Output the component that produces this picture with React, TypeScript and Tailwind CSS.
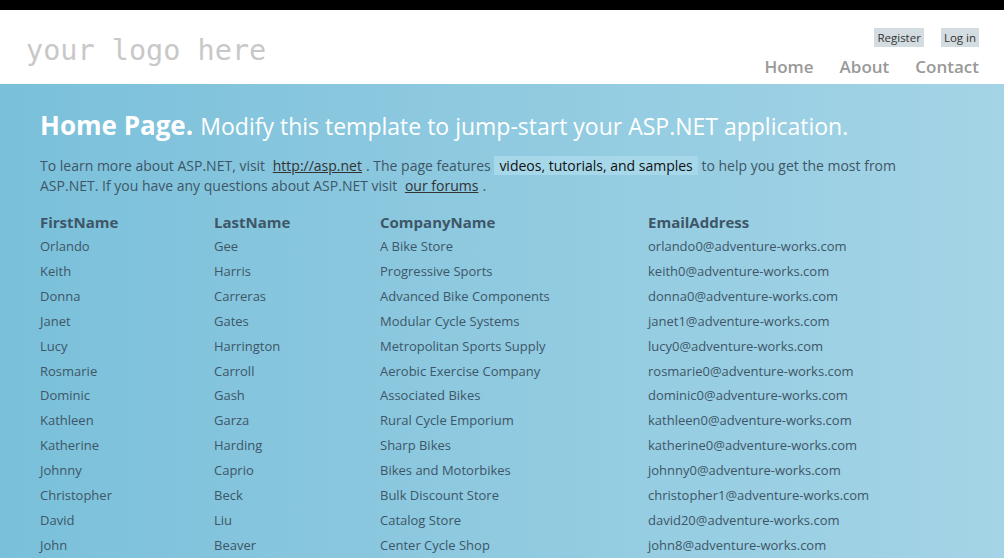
const rows = [
  ["Orlando", "Gee", "A Bike Store", "orlando0@adventure-works.com"],
  ["Keith", "Harris", "Progressive Sports", "keith0@adventure-works.com"],
  ["Donna", "Carreras", "Advanced Bike Components", "donna0@adventure-works.com"],
  ["Janet", "Gates", "Modular Cycle Systems", "janet1@adventure-works.com"],
  ["Lucy", "Harrington", "Metropolitan Sports Supply", "lucy0@adventure-works.com"],
  ["Rosmarie", "Carroll", "Aerobic Exercise Company", "rosmarie0@adventure-works.com"],
  ["Dominic", "Gash", "Associated Bikes", "dominic0@adventure-works.com"],
  ["Kathleen", "Garza", "Rural Cycle Emporium", "kathleen0@adventure-works.com"],
  ["Katherine", "Harding", "Sharp Bikes", "katherine0@adventure-works.com"],
  ["Johnny", "Caprio", "Bikes and Motorbikes", "johnny0@adventure-works.com"],
  ["Christopher", "Beck", "Bulk Discount Store", "christopher1@adventure-works.com"],
  ["David", "Liu", "Catalog Store", "david20@adventure-works.com"],
  ["John", "Beaver", "Center Cycle Shop", "john8@adventure-works.com"],
];

const cols = ["FirstName", "LastName", "CompanyName", "EmailAddress"];

function Header() {
  return (
    <header className="bg-white h-[74px] flex justify-between">
      <div className="pl-[26px] pt-[23px] font-['DejaVu_Sans_Mono',monospace] text-[28.5px] text-[#c8c8c8] leading-[36px]">
        your logo here
      </div>
      <div className="flex flex-col items-end pr-[25px] pt-[18px]">
        <div className="flex gap-[17px] text-[11.5px] text-[#333]">
          <a className="bg-[#d3dce0] px-[3px] h-[19px] leading-[19px]">Register</a>
          <a className="bg-[#d3dce0] px-[3px] h-[19px] leading-[19px]">Log in</a>
        </div>
        <nav className="flex gap-[26px] mt-[8px] text-[17px] font-semibold text-[#999] leading-[24px]">
          <a>Home</a>
          <a>About</a>
          <a>Contact</a>
        </nav>
      </div>
    </header>
  );
}

export default function App() {
  return (
    <div className="min-h-[558px] bg-gradient-to-r from-[#7ac0da] to-[#a4d4e6] font-['Open_Sans',sans-serif] text-[#3e5667]">
      <div className="h-[10px] bg-black" />
      <Header />
      <section className="px-10 pt-[25px]">
        <h1 className="text-white leading-[32px]">
          <span className="font-bold text-[26px] mr-[3px]">Home Page.</span>{" "}
          <span className="text-[23px]">Modify this template to jump-start your ASP.NET application.</span>
        </h1>
        <p className="mt-[11px] text-[14px] leading-[20px] max-w-[880px]">
          To learn more about ASP.NET, visit{" "}
          <a className="px-1 underline text-[#333]">http://asp.net</a>. The page features{" "}
          <a className="px-[5px] bg-[#a6d8ea] text-[#111]">videos, tutorials, and samples</a> to help you get the most from
          ASP.NET. If you have any questions about ASP.NET visit{" "}
          <a className="px-1 underline text-[#333]">our forums</a>.
        </p>
        <div className="mt-[14px] grid grid-cols-[174px_166px_268px_1fr] text-[13px]">
          {cols.map((c) => (
            <div key={c} className="font-bold text-[15px] leading-[24px]">{c}</div>
          ))}
          {rows.map((r) =>
            r.map((v, i) => (
              <div key={r[0] + i} className="leading-[24.9px]">{v}</div>
            ))
          )}
        </div>
      </section>
    </div>
  );
}
